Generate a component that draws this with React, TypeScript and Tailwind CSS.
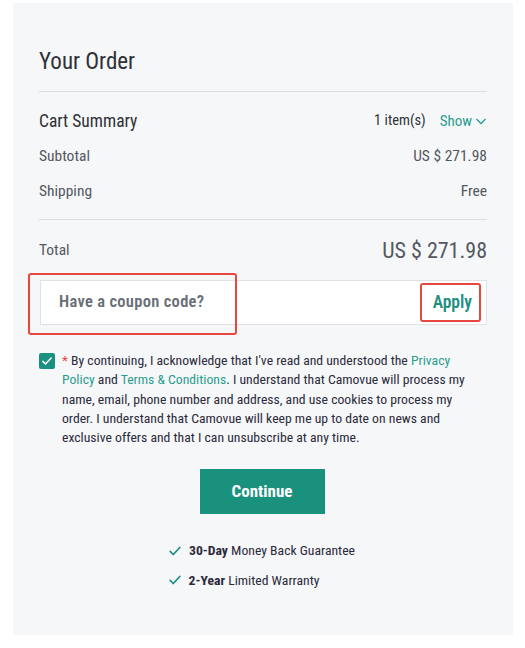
function Check({ className }: { className?: string }) {
  return (
    <svg viewBox="0 0 16 16" className={className} fill="none" stroke="currentColor" strokeWidth={2} strokeLinecap="round" strokeLinejoin="round">
      <path d="M2.5 8.5l3.5 3.5 7.5-8" />
    </svg>
  );
}

export default function App() {
  const font = { fontFamily: "'Roboto Condensed', Roboto, sans-serif" };
  return (
    <div className="w-[525px] h-[648px] bg-white pt-[3px] pl-[13px]" style={font}>
      <div className="w-[500px] h-[632px] bg-[#f6f7f9] px-[26px] flex flex-col relative">
        <h1 className="text-[23px] leading-[30px] text-[#2f3136] mt-[44px] font-normal">Your Order</h1>
        <div className="h-px bg-[#dadcdf] mt-[14px]" />
        <div className="flex items-center justify-between mt-[17px] h-[24px]">
          <span className="text-[17.5px] text-[#2f3136]">Cart Summary</span>
          <div className="flex items-center gap-[14px]">
            <span className="text-[14.5px] text-[#2f3136]">1 item(s)</span>
            <span className="text-[15px] text-[#2a9d8f] flex items-center gap-[3px]">
              Show
              <svg viewBox="0 0 12 12" className="w-[12px] h-[12px]" fill="none" stroke="currentColor" strokeWidth={1.3}>
                <path d="M1.5 4l4.5 4.5 4.5-4.5" />
              </svg>
            </span>
          </div>
        </div>
        <div className="flex items-center justify-between mt-[12px] h-[24px] text-[15.5px] text-[#54585f]">
          <span>Subtotal</span>
          <span>US $ 271.98</span>
        </div>
        <div className="flex items-center justify-between mt-[11px] h-[24px] text-[15.5px] text-[#54585f]">
          <span>Shipping</span>
          <span>Free</span>
        </div>
        <div className="h-px bg-[#dadcdf] mt-[15px]" />
        <div className="flex items-center justify-between mt-[14px] h-[32px]">
          <span className="text-[15.5px] text-[#54585f] mt-[2px]">Total</span>
          <span className="text-[22px] text-[#54585f]">US $ 271.98</span>
        </div>
        <div className="mt-[14px] ml-px h-[45px] bg-white border border-[#dfe1e5] flex items-center justify-between pl-[18px] pr-[14px]">
          <span className="text-[16.5px] tracking-[0.3px] font-semibold text-[#6a6e76]">Have a coupon code?</span>
          <span className="text-[17.5px] font-semibold text-[#1f8f80]">Apply</span>
        </div>
        <div className="absolute left-[15px] top-[270px] w-[209px] h-[62px] border-2 border-[#e8473f] rounded-[3px]" />
        <div className="absolute left-[407px] top-[280px] w-[61px] h-[39px] border-2 border-[#e8473f] rounded-[3px]" />
        <div className="flex mt-[26px] gap-[7px]">
          <div className="w-[16px] h-[16px] bg-[#1a9080] rounded-[2px] flex items-center justify-center shrink-0 mt-[2px]">
            <Check className="w-[12px] h-[12px] text-white" />
          </div>
          <p className="text-[13.7px] leading-[19.3px] text-[#2b2a3a] w-[412px]">
            <span className="text-[#e8473f]">*</span> By continuing, I acknowledge that I've read and understood the{" "}
            <span className="text-[#2a9d8f]">Privacy Policy</span> and <span className="text-[#2a9d8f]">Terms &amp; Conditions</span>. I understand that Camovue will process my name, email, phone number and address, and use cookies to process my order. I understand that Camovue will keep me up to date on news and exclusive offers and that I can unsubscribe at any time.
          </p>
        </div>
        <div className="flex justify-center mt-[22px]">
          <button className="w-[125px] h-[45px] bg-[#1a917c] text-white text-[17px] font-bold ml-[-2px]">Continue</button>
        </div>
        <div className="flex flex-col items-center mt-[26px] gap-[9px] text-[13.7px] text-[#2b2a3a]">
          <div className="flex items-center gap-[7px] ml-[-3px]">
            <Check className="w-[14px] h-[14px] text-[#1a9080]" />
            <span><b>30-Day</b> Money Back Guarantee</span>
          </div>
          <div className="flex items-center gap-[7px] ml-[-39px]">
            <Check className="w-[14px] h-[14px] text-[#1a9080]" />
            <span><b>2-Year</b> Limited Warranty</span>
          </div>
        </div>
      </div>
    </div>
  );
}
